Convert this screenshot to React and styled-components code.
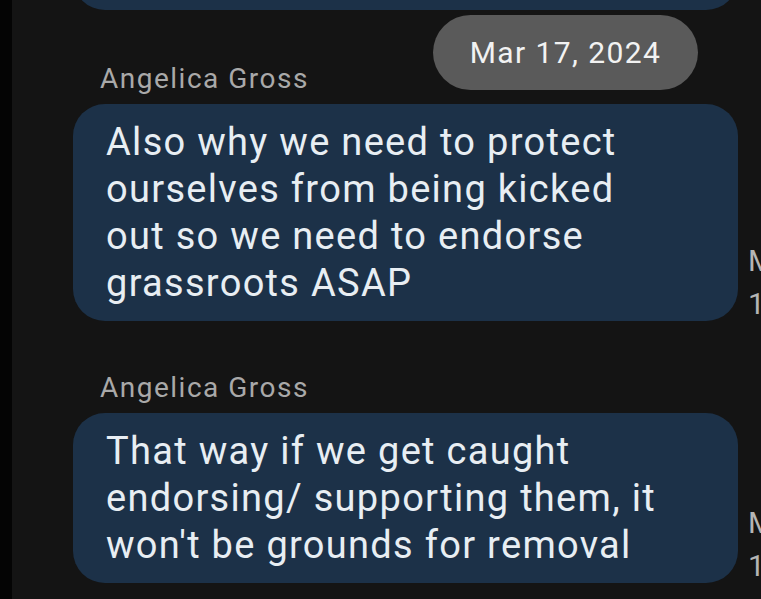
import React from 'react';
import styled, { createGlobalStyle } from 'styled-components';

const GlobalStyle = createGlobalStyle`
  html, body {
    margin: 0;
    padding: 0;
    background: #141414;
    overflow: hidden;
  }
  body {
    font-family: Roboto, "Noto Sans", "Liberation Sans", sans-serif;
  }
`;

const Screen = styled.div`
  position: relative;
  display: flex;
  width: 761px;
  height: 599px;
  overflow: hidden;
  background: #141414;
`;

const Edge = styled.div`
  width: 12px;
  flex: none;
  background: #040404;
`;

const Thread = styled.div`
  flex: 1;
  display: flex;
  flex-direction: column;
  margin-top: -70px; /* scrolled */
  padding-left: 61px;
`;

const Group = styled.div`
  display: flex;
  flex-direction: column;
  margin-top: ${(p) => p.$gap || 0}px;
`;

const Sender = styled.div`
  padding-left: 27px;
  margin-bottom: 8px;
  font-size: 28px;
  line-height: 34px;
  letter-spacing: 1.5px;
  color: #a9a9a9;
`;

const Row = styled.div`
  display: flex;
  align-items: flex-end;
  gap: 10px;
`;

const Bubble = styled.div`
  width: 665px;
  flex: none;
  box-sizing: border-box;
  height: ${(p) => (p.$height ? `${p.$height}px` : 'auto')};
  padding: 15px 20px 14px 33px;
  border-radius: 32px;
  background: #1c3148;
  color: #e8eef3;
  font-size: 38px;
  line-height: 47px;
  letter-spacing: 1.3px;
`;

const Line = styled.span`
  display: block;
  white-space: nowrap;
`;

const Meta = styled.div`
  flex: none;
  margin-bottom: -4px;
  font-size: 30px;
  line-height: 43px;
  color: #b5b5b5;
  white-space: nowrap;
`;

const DateChip = styled.div`
  position: absolute;
  left: 433px;
  top: 15px;
  width: 265px;
  height: 75px;
  display: flex;
  align-items: center;
  justify-content: center;
  border-radius: 38px;
  background: #5a5a5a;
  color: #f2f2f2;
  font-size: 30px;
  letter-spacing: 1.4px;
`;

const messages = [
  {
    lines: [
      'Also why we need to protect',
      'ourselves from being kicked',
      'out so we need to endorse',
      'grassroots ASAP',
    ],
  },
  {
    lines: [
      'That way if we get caught',
      'endorsing/ supporting them, it',
      "won't be grounds for removal",
    ],
  },
];

export default function App() {
  return (
    <>
      <GlobalStyle />
      <Screen>
        <Edge />
        <Thread>
          <Row>
            <Bubble $height={80} />
          </Row>
          {messages.map((m, i) => (
            <Group key={i} $gap={i === 0 ? 52 : 50}>
              <Sender>Angelica Gross</Sender>
              <Row>
                <Bubble>
                  {m.lines.map((l) => (
                    <Line key={l}>{l}</Line>
                  ))}
                </Bubble>
                <Meta>
                  Mar 17
                  <br />
                  12:14 PM
                </Meta>
              </Row>
            </Group>
          ))}
        </Thread>
        <DateChip>Mar 17, 2024</DateChip>
      </Screen>
    </>
  );
}
